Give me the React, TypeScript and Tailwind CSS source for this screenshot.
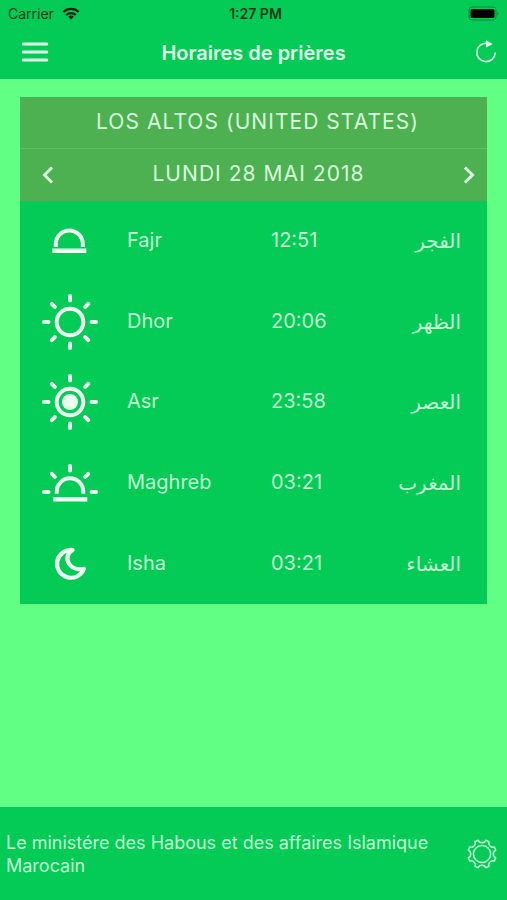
import React from "react";

interface Prayer {
  name: string;
  time: string;
  arabic: string;
  icon: React.ReactNode;
}

interface SkyIconProps {
  children: React.ReactNode;
}

const SkyIcon: React.FC<SkyIconProps> = ({ children }) => (
  <svg
    viewBox="0 0 60 60"
    className="mx-auto size-[60px]"
    fill="none"
    stroke="currentColor"
    strokeWidth="4"
    aria-hidden="true"
  >
    {children}
  </svg>
);

// Rays above the horizon
const UpperRays = () => (
  <path
    strokeLinecap="round"
    d="M30 4v4.5M4 30h4.5M51.5 30h4.5M11.8 11.8l3 3M48.2 11.8l-3 3"
  />
);

const LowerRays = () => (
  <path
    strokeLinecap="round"
    d="M30 51.5v4.5M11.8 48.2l3-3M48.2 48.2l-3-3"
  />
);

const FajrIcon = () => (
  <SkyIcon>
    <path d="M15.8 36v-3a13.5 13.5 0 0 1 27 0v3" />
    <path strokeWidth="4.6" d="M12.3 39.8h34" />
  </SkyIcon>
);

const DhorIcon = () => (
  <SkyIcon>
    <UpperRays />
    <LowerRays />
    <circle cx="30" cy="30" r="13.3" />
  </SkyIcon>
);

const AsrIcon = () => (
  <SkyIcon>
    <UpperRays />
    <LowerRays />
    <circle cx="30" cy="30" r="13.3" />
    <circle cx="30" cy="30" r="8" fill="currentColor" stroke="none" />
  </SkyIcon>
);

const MaghrebIcon = () => (
  <SkyIcon>
    <g transform="translate(0 9)">
      <UpperRays />
      <path d="M16.8 31.8v-2.3a13.2 13.2 0 0 1 26.4 0v2.3" />
      <path strokeWidth="4.6" d="M13.3 37.2h34" />
    </g>
  </SkyIcon>
);

const IshaIcon = () => (
  <SkyIcon>
    <path
      strokeWidth="4.2"
      strokeLinejoin="round"
      d="M32.6 16A13.9 13.9 0 1 0 43.9 34.8C37.5 36.4 31.5 34 28.7 29.2C26 24.5 27.6 18.8 32.6 16z"
    />
  </SkyIcon>
);

const prayers: Prayer[] = [
  { name: "Fajr", time: "12:51", arabic: "الفجر", icon: <FajrIcon /> },
  { name: "Dhor", time: "20:06", arabic: "الظهر", icon: <DhorIcon /> },
  { name: "Asr", time: "23:58", arabic: "العصر", icon: <AsrIcon /> },
  { name: "Maghreb", time: "03:21", arabic: "المغرب", icon: <MaghrebIcon /> },
  { name: "Isha", time: "03:21", arabic: "العشاء", icon: <IshaIcon /> },
];

const StatusBar = () => (
  <div className="grid h-[27px] grid-cols-[1fr_auto_1fr] items-center px-2 text-sm text-[#063d17]">
    <div className="flex items-center gap-2">
      <span>Carrier</span>
      <svg viewBox="0 0 18 13" className="h-[13px] w-[18px]" aria-hidden="true">
        <g fill="none" stroke="#05220e" strokeWidth="2.3">
          <path d="M1.3 5a11 11 0 0 1 15.4 0" />
          <path d="M4.2 8a7 7 0 0 1 9.6 0" />
        </g>
        <path fill="#05220e" d="M9 12.6 6.2 9.8a4 4 0 0 1 5.6 0z" />
      </svg>
    </div>
    <span className="pl-1 font-semibold">1:27 PM</span>
    <svg
      viewBox="0 0 31 15"
      className="h-[15px] w-[31px] justify-self-end"
      aria-hidden="true"
    >
      <rect x="1" y="1" width="27" height="13" rx="3" fill="none" stroke="#078a3c" />
      <rect x="2.5" y="3" width="24" height="9" rx="1.5" fill="#000" />
      <path d="M29.3 5.5c1.5.6 1.5 3.4 0 4z" fill="#078a3c" />
    </svg>
  </div>
);

const NavBar = () => (
  <div className="grid h-[52px] grid-cols-[1fr_auto_1fr] items-center px-2 text-[#e2ffea]">
    <button type="button" aria-label="Menu" className="ml-3 justify-self-start">
      <svg viewBox="0 0 30 24" className="h-6 w-[30px]" aria-hidden="true">
        <path
          d="M3.2 3h23.6M3.2 11h23.6M3.2 19h23.6"
          stroke="currentColor"
          strokeWidth="3"
          strokeLinecap="round"
        />
      </svg>
    </button>
    <h1 className="text-xl font-semibold">Horaires de prières</h1>
    <button type="button" aria-label="Actualiser" className="justify-self-end">
      <svg viewBox="0 0 26 26" className="size-[26px]" aria-hidden="true">
        <path
          d="M14 3.3A9.200 9.200 0 1 0 22.2 12.5"
          fill="none"
          stroke="currentColor"
          strokeWidth="1.6"
        />
        <path d="M13 0.3 19.8 4l-6.8 3.5z" fill="currentColor" />
      </svg>
    </button>
  </div>
);

const Chevron: React.FC<{ d: string }> = ({ d }) => (
  <svg
    viewBox="0 0 24 24"
    className="size-6"
    fill="none"
    stroke="currentColor"
    strokeWidth="3"
    aria-hidden="true"
  >
    <path d={d} />
  </svg>
);

const PrayerTable = () => (
  <table className="h-[403px] w-full table-fixed text-left text-xl text-[#c3f9d3]">
    <colgroup>
      <col className="w-[107px]" />
      <col className="w-36" />
      <col />
      <col />
    </colgroup>
    <tbody>
      {prayers.map(({ name, time, arabic, icon }) => (
        <tr key={name}>
          <td className="p-0 pr-2 text-[#ebfff1]">{icon}</td>
          <th scope="row" className="p-0 pb-[2px] font-normal">
            {name}
          </th>
          <td className="p-0 pb-[2px]">{time}</td>
          <td
            lang="ar"
            dir="rtl"
            className="p-0 pr-[26px] text-right font-['DejaVu_Sans',sans-serif]"
          >
            {arabic}
          </td>
        </tr>
      ))}
    </tbody>
  </table>
);

const Footer = () => (
  <footer className="flex min-h-[93px] items-center justify-between bg-[#03cb56] pr-[9px] pl-[6px] text-[#c3f9d3]">
    <p className="max-w-[430px] text-lg leading-[23px]">
      Le ministére des Habous et des affaires Islamique Marocain
    </p>
    <button type="button" aria-label="Paramètres" className="shrink-0">
      <svg
        viewBox="-16 -16 32 32"
        className="size-8"
        fill="none"
        stroke="currentColor"
        strokeWidth="1.5"
        strokeLinejoin="round"
        aria-hidden="true"
      >
        <circle r="8.6" />
        <path d="M-3.8-13.7C-2.5-10.5 2.5-10.5 3.8-13.7L7-12.4C5.7-9.2 9.2-5.7 12.4-7L13.7-3.8C10.5-2.5 10.5 2.5 13.7 3.8L12.4 7C9.2 5.7 5.7 9.2 7 12.4L3.8 13.7C2.5 10.5-2.5 10.5-3.8 13.7L-7 12.4C-5.7 9.2-9.2 5.7-12.4 7L-13.7 3.8C-10.5 2.5-10.5-2.5-13.7-3.8L-12.4-7C-9.2-5.7-5.7-9.2-7-12.4Z" />
      </svg>
    </button>
  </footer>
);

const App: React.FC = () => {
  return (
    <div className="flex min-h-screen flex-col bg-[#62ff85] font-[Inter,sans-serif]">
      <header className="bg-[#03cb56]">
        <StatusBar />
        <NavBar />
      </header>

      <main className="grow px-5 pt-[18px] pb-5">
        <section className="bg-[#03cb56]">
          <div className="bg-[#4db051] text-[21px] tracking-wider text-[#d9fbdd]">
            <h2 className="flex h-[52px] items-center justify-center border-b border-[#50c660] pb-[2px] pl-2">
              LOS ALTOS (UNITED STATES)
            </h2>
            <div className="flex h-[52px] items-center justify-between pr-[6px] pl-4">
              <button type="button" aria-label="Jour précédent">
                <Chevron d="M16 4.5 8.5 12l7.5 7.5" />
              </button>
              <span className="pb-[2px]">LUNDI 28 MAI 2018</span>
              <button type="button" aria-label="Jour suivant">
                <Chevron d="M8 4.5 15.5 12 8 19.5" />
              </button>
            </div>
          </div>
          <PrayerTable />
        </section>
      </main>

      <Footer />
    </div>
  );
};

export default App;
